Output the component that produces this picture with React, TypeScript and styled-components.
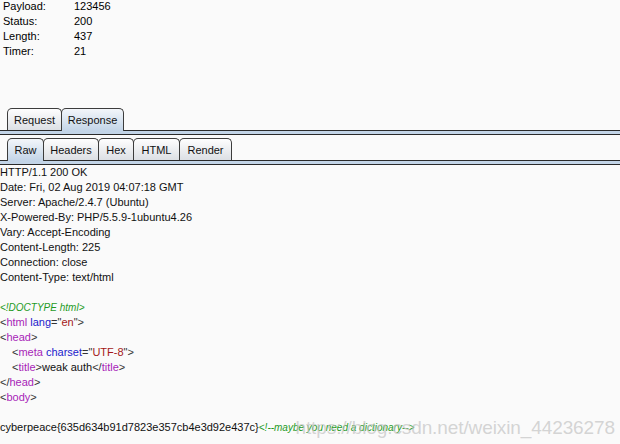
import styled, { createGlobalStyle } from 'styled-components'

const GlobalStyle = createGlobalStyle`
  html, body {
    margin: 0;
    padding: 0;
    background: #fafafa;
  }
  body {
    font-family: 'Liberation Sans', Arial, sans-serif;
    color: #000;
  }
`

const band = '#c2d4e7'
const edge = '#2a2a2a'

const Page = styled.div`
  position: relative;
  width: 620px;
  height: 444px;
  overflow: hidden;
  display: flex;
  flex-direction: column;
`

const InfoGrid = styled.div`
  display: grid;
  grid-template-columns: 71px auto;
  margin-top: -1px;
  padding-left: 3px;
  font-size: 11px;
  line-height: 15px;
`

const TabStrip = styled.div<{ $top: number }>`
  display: flex;
  align-items: flex-end;
  height: ${(p) => p.$top + 22}px;
  padding-left: 7px;
  border-bottom: 1px solid ${edge};
`

const Tab = styled.div<{ $width: number; $active?: boolean }>`
  box-sizing: border-box;
  width: ${(p) => p.$width}px;
  height: ${(p) => (p.$active ? 23 : 22)}px;
  margin-bottom: ${(p) => (p.$active ? -1 : 0)}px;
  margin-left: -1px;
  &:first-child {
    margin-left: 0;
  }
  position: relative;
  z-index: ${(p) => (p.$active ? 1 : 0)};
  display: flex;
  align-items: center;
  justify-content: center;
  padding-bottom: ${(p) => (p.$active ? 1 : 0)}px;
  border: 1px solid #3c3c3c;
  border-bottom: none;
  border-radius: 5px 5px 0 0;
  background: ${(p) =>
    p.$active
      ? `linear-gradient(#f3f6fa, ${band})`
      : 'linear-gradient(#fefefe, #dcdfe4)'};
  font-size: 11px;
  color: #111;
`

const Band = styled.div`
  height: 3px;
  background: ${band};
  border-bottom: 1px solid ${edge};
`

const Body = styled.div`
  font-size: 11px;
  line-height: 15px;
  color: #111;
`

const Line = styled.div<{ $indent?: number }>`
  white-space: pre;
  height: 15px;
  padding-left: ${(p) => p.$indent ?? 0}px;
`

const Punct = styled.span`
  color: #333;
`
const TagName = styled.span`
  color: #a81fb8;
`
const Attr = styled.span`
  color: #1b1bcc;
`
const Value = styled.span`
  color: #a41818;
`
const Comment = styled.span`
  color: #1f9a1f;
  font-style: italic;
  font-size: 10px;
`

const Watermark = styled.div`
  position: absolute;
  right: 5px;
  bottom: 5px;
  font-size: 19px;
  line-height: 22px;
  color: rgba(195, 195, 195, 0.7);
  letter-spacing: -0.1px;
`

const info = [
  ['Payload:', '123456'],
  ['Status:', '200'],
  ['Length:', '437'],
  ['Timer:', '21'],
]

const headers = [
  'HTTP/1.1 200 OK',
  'Date: Fri, 02 Aug 2019 04:07:18 GMT',
  'Server: Apache/2.4.7 (Ubuntu)',
  'X-Powered-By: PHP/5.5.9-1ubuntu4.26',
  'Vary: Accept-Encoding',
  'Content-Length: 225',
  'Connection: close',
  'Content-Type: text/html',
]

const Open = ({ name, close }: { name: string; close?: boolean }) => (
  <>
    <Punct>{close ? '</' : '<'}</Punct>
    <TagName>{name}</TagName>
  </>
)

export default function App() {
  return (
    <Page>
      <GlobalStyle />
      <InfoGrid>
        {info.map(([k, v]) => (
          <>
            <span key={k}>{k}</span>
            <span key={k + 'v'}>{v}</span>
          </>
        ))}
      </InfoGrid>

      <TabStrip $top={49}>
        <Tab $width={55}>Request</Tab>
        <Tab $width={63} $active>
          Response
        </Tab>
      </TabStrip>
      <Band />

      <TabStrip $top={3}>
        <Tab $width={37} $active>
          Raw
        </Tab>
        <Tab $width={56}>Headers</Tab>
        <Tab $width={36}>Hex</Tab>
        <Tab $width={47}>HTML</Tab>
        <Tab $width={53}>Render</Tab>
      </TabStrip>
      <Band />

      <Body>
        {headers.map((h) => (
          <Line key={h}>{h}</Line>
        ))}
        <Line />
        <Line>
          <Comment>&lt;!DOCTYPE html&gt;</Comment>
        </Line>
        <Line>
          <Open name="html" /> <Attr>lang</Attr>
          <Punct>="</Punct>
          <Value>en</Value>
          <Punct>"&gt;</Punct>
        </Line>
        <Line>
          <Open name="head" />
          <Punct>&gt;</Punct>
        </Line>
        <Line $indent={12}>
          <Open name="meta" /> <Attr>charset</Attr>
          <Punct>="</Punct>
          <Value>UTF-8</Value>
          <Punct>"&gt;</Punct>
        </Line>
        <Line $indent={12}>
          <Open name="title" />
          <Punct>&gt;</Punct>weak auth
          <Open name="title" close />
          <Punct>&gt;</Punct>
        </Line>
        <Line>
          <Open name="head" close />
          <Punct>&gt;</Punct>
        </Line>
        <Line>
          <Open name="body" />
          <Punct>&gt;</Punct>
        </Line>
        <Line />
        <Line>
          cyberpeace{'{635d634b91d7823e357cb4e3d92e437c}'}
          <Comment>&lt;!--maybe you need a dictionary--&gt;</Comment>
        </Line>
      </Body>

      <Watermark>https://blog.csdn.net/weixin_44236278</Watermark>
    </Page>
  )
}
